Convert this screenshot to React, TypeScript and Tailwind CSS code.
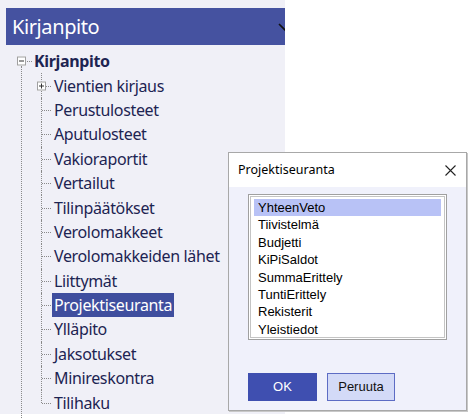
import React from "react";

const items = [
  "Perustulosteet",
  "Aputulosteet",
  "Vakioraportit",
  "Vertailut",
  "Tilinpäätökset",
  "Verolomakkeet",
  "Verolomakkeiden lähet",
  "Liittymät",
  "Projektiseuranta",
  "Ylläpito",
  "Jaksotukset",
  "Minireskontra",
  "Tilihaku",
];

const reports = [
  "YhteenVeto",
  "Tiivistelmä",
  "Budjetti",
  "KiPiSaldot",
  "SummaErittely",
  "TuntiErittely",
  "Rekisterit",
  "Yleistiedot",
];

function BoxSign({ plus }: { plus?: boolean }) {
  return (
    <span className="absolute top-1/2 -translate-y-1/2 w-[9px] h-[9px] border border-[#a0a0a0] bg-white flex items-center justify-center">
      <svg width="7" height="7" viewBox="0 0 7 7">
        <path d="M1 3.5h5" stroke="#333" strokeWidth="1" />
        {plus && <path d="M3.5 1v5" stroke="#333" strokeWidth="1" />}
      </svg>
    </span>
  );
}

function TreeRow({ label, last, plus, selected }: { label: string; last?: boolean; plus?: boolean; selected?: boolean }) {
  return (
    <div className="relative h-[24.4px] flex items-center pl-[46px]">
      {/* pystyviiva */}
      <span
        className={`absolute left-[35px] top-0 border-l border-dotted border-[#8a8a8a] ${last ? "h-1/2" : "h-full"}`}
      />
      <span className="absolute left-[36px] top-1/2 w-[9px] border-t border-dotted border-[#8a8a8a]" />
      {plus && (
        <span className="absolute left-[31px] top-0 h-full">
          <BoxSign plus />
        </span>
      )}
      <span
        className={`px-[2px] leading-[24px] h-[24px] whitespace-nowrap ${selected ? "bg-[#3f4e9e] text-white" : "text-[#1d2452]"}`}
      >
        {label}
      </span>
    </div>
  );
}

export default function App() {
  return (
    <div className="relative w-[475px] h-[419px] overflow-hidden bg-white">
      <div className="w-[285px] h-[414px] bg-[#f0f0f7] pt-[8px] pl-[6px]">
        <div className="relative h-[37px] bg-[#4552a0] overflow-hidden flex items-center pl-[6px]">
          <span
            className="text-white text-[20px] tracking-[-0.4px]"
            style={{ fontFamily: '"Noto Sans", sans-serif' }}
          >
            Kirjanpito
          </span>
          <svg className="absolute left-[272px] top-[15px]" width="14" height="9" viewBox="0 0 14 9">
            <path d="M1 1l6 6 6-6" fill="none" stroke="#111" strokeWidth="1.6" />
          </svg>
        </div>
        <div
          className="relative text-[16px] tracking-[-0.35px] pt-[4px]"
          style={{ fontFamily: '"Noto Sans", sans-serif' }}
        >
          <span className="absolute left-[15px] top-[21px] h-[400px] border-l border-dotted border-[#8a8a8a]" />
          <div className="relative h-[24.4px] flex items-center pl-[26px]">
            <span className="absolute left-[11px] top-0 h-full">
              <BoxSign />
            </span>
            <span className="absolute left-[21px] top-1/2 w-[5px] border-t border-dotted border-[#8a8a8a]" />
            <span className="font-bold text-[#1d2452] px-[2px]">Kirjanpito</span>
          </div>
          <TreeRow label="Vientien kirjaus" plus />
          {items.map((it, i) => (
            <TreeRow
              key={it}
              label={it}
              last={i === items.length - 1}
              selected={it === "Projektiseuranta"}
            />
          ))}
        </div>
      </div>

      <div
        className="absolute left-[228px] top-[152px] w-[239px] h-[259px] border border-[#a8a8a8] shadow-[1px_1px_0_#c8c8c8] bg-[#f0f1fb] flex flex-col"
        style={{ fontFamily: '"Liberation Sans", Arial, sans-serif' }}
      >
        <div className="h-[34px] bg-white flex items-center justify-between pl-[9px] pr-[10px] shrink-0">
          <span className="text-[12.5px] text-black" style={{ fontFamily: '"Noto Sans", sans-serif' }}>
            Projektiseuranta
          </span>
          <svg width="11" height="11" viewBox="0 0 11 11">
            <path d="M0.5 0.5l10 10M10.5 0.5l-10 10" stroke="#222" strokeWidth="1.1" />
          </svg>
        </div>
        <div className="flex-1 px-[19px] pt-[7px]">
          <div className="h-[146px] bg-white border border-[#a0a0a0] shadow-[inset_0_0_0_1px_#fff,inset_0_0_0_2px_#c4c4c4] pt-[4px] px-[5px]">
            {reports.map((r, i) => (
              <div
                key={r}
                className={`h-[17.4px] leading-[17.4px] pl-[4px] text-[13px] text-black ${i === 0 ? "bg-[#b8c2f6]" : ""}`}
              >
                {r}
              </div>
            ))}
          </div>
          <div className="flex gap-[10px] mt-[33px]">
            <button className="w-[69px] h-[28px] bg-[#3f4fb0] text-white text-[13px]">OK</button>
            <button className="w-[68px] h-[28px] bg-[#d3daf7] border border-[#5d6cc4] text-[#111] text-[13px]">
              Peruuta
            </button>
          </div>
        </div>
      </div>
    </div>
  );
}
